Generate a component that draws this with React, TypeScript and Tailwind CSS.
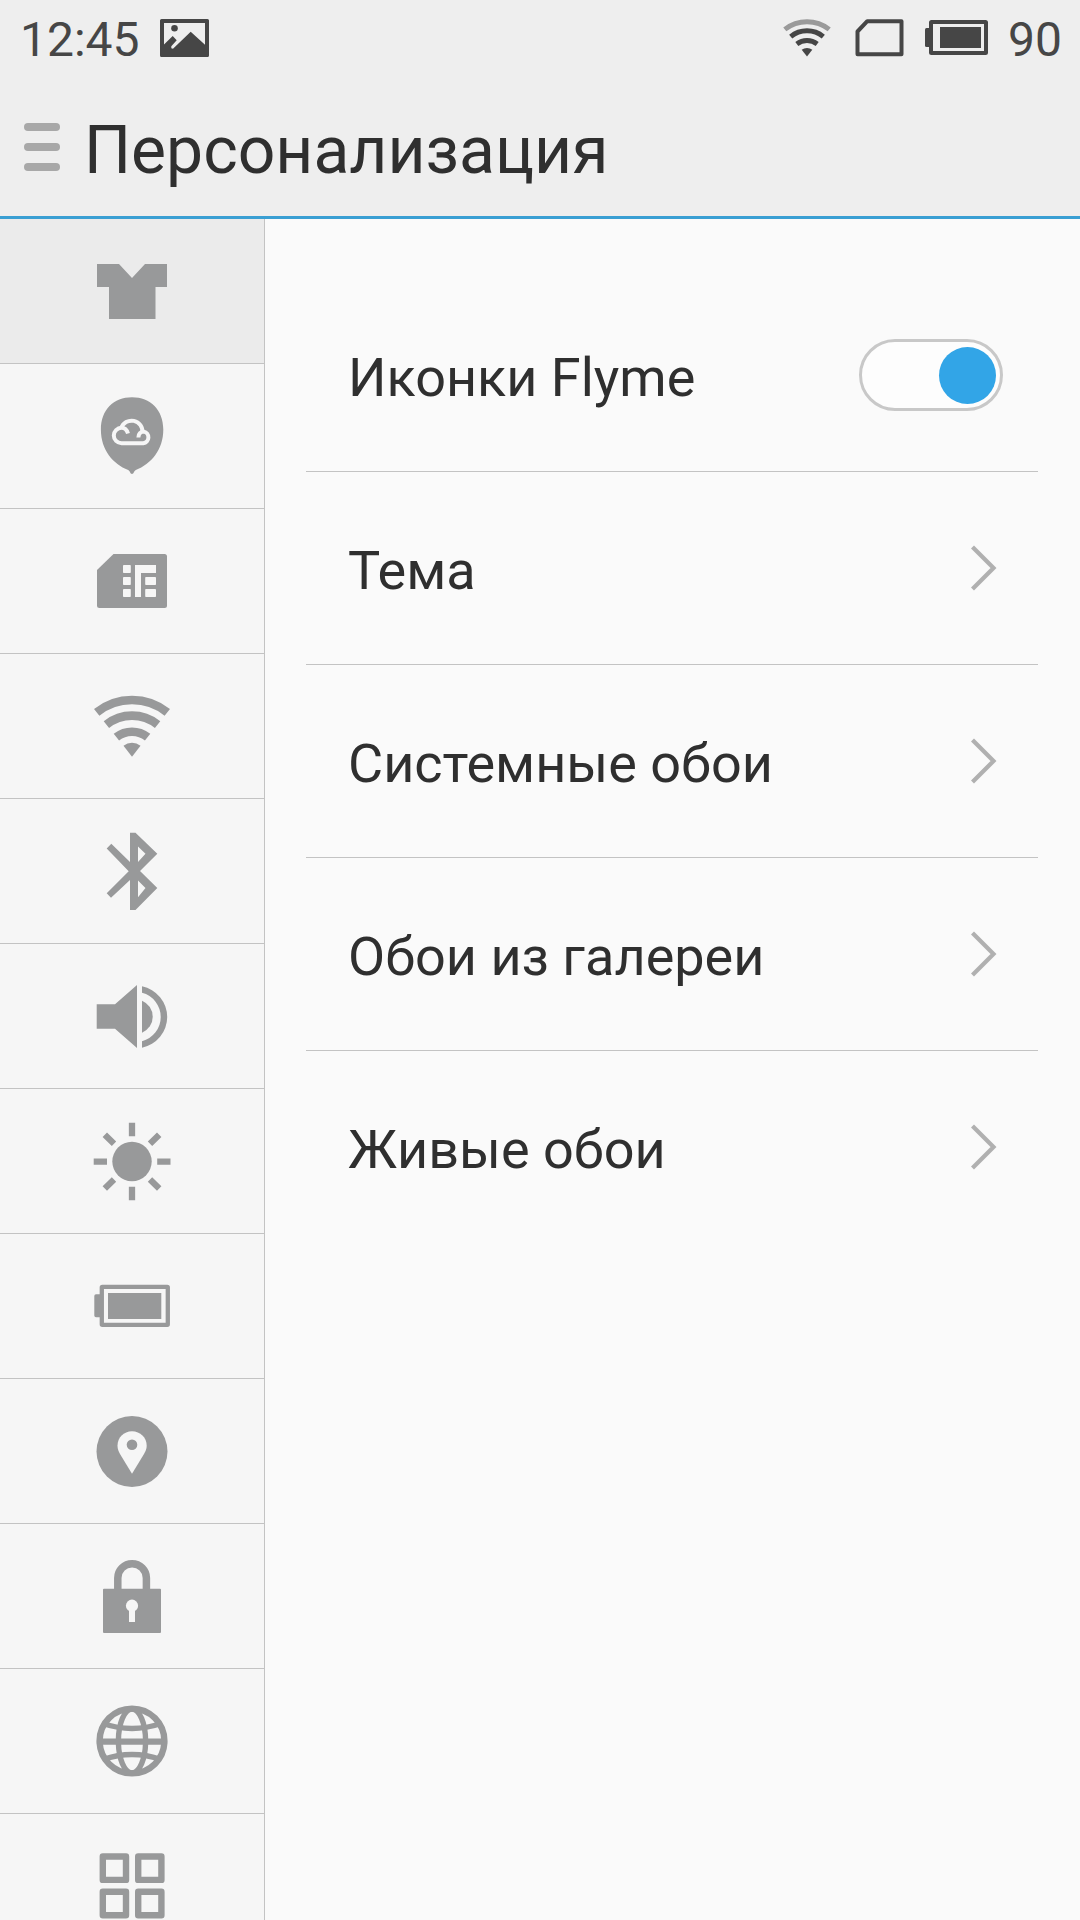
import { useState } from "react";
import type { ReactNode } from "react";

const sections: { id: string; label: string; icon: ReactNode }[] = [
  {
    id: "theme",
    label: "Персонализация",
    icon: <path d="M5 13H27L40 27L53 13H75V36H63.5V68H17V36H5Z" />,
  },
  {
    id: "account",
    label: "Аккаунт Flyme",
    icon: (
      <>
        <path d="M40 1.3C58.5 1.3 71.3 14 71.3 33.5C71.3 54 59 68 43.8 74C42 74.8 41.8 78 40 78C38.2 78 38 74.8 36.2 74C21 68 8.9 54 8.9 33.5C8.9 14 21.5 1.3 40 1.3Z" />
        <g fill="none" stroke="#f6f6f6" strokeWidth="4">
          <path d="M36 37.5C34.8 33.5 32.3 31.8 29.5 31.8A7.5 7.5 0 0 0 29.5 47.2H51.3A5.9 5.9 0 0 0 51.8 35.6C48.6 35.8 46.6 38 46.4 41.5" />
          <path d="M29.2 32.2A10.9 10.9 0 0 1 50.4 36.8" />
        </g>
      </>
    ),
  },
  {
    id: "sim",
    label: "SIM-карта",
    icon: (
      <>
        <path d="M21.5 13H72.5A2.5 2.5 0 0 1 75 15.5V64.5A2.5 2.5 0 0 1 72.5 67H7.5A2.5 2.5 0 0 1 5 64.5V29Z" />
        <g fill="#f6f6f6">
          <rect x="31" y="24" width="7.8" height="8" rx="0.8" />
          <rect x="31" y="36" width="7.8" height="8" rx="0.8" />
          <rect x="31" y="48" width="7.8" height="8" rx="0.8" />
          <path d="M43 24H64V32H49V56H43Z" />
          <rect x="53.2" y="36" width="10.8" height="8" rx="0.8" />
          <rect x="53.2" y="48" width="10.8" height="8" rx="0.8" />
        </g>
      </>
    ),
  },
  {
    id: "wifi",
    label: "Wi-Fi",
    icon: (
      <>
        <g fill="none" stroke="currentColor" strokeWidth="8.6">
          <path d="M4.7 26.4A56.6 56.6 0 0 1 75.3 26.4" />
          <path d="M14.4 38.6A41 41 0 0 1 65.6 38.6" />
          <path d="M24.4 51.2A25 25 0 0 1 55.6 51.2" />
        </g>
        <path d="M40 70.7L31.5 59.7A14 14 0 0 1 48.5 59.7Z" />
      </>
    ),
  },
  {
    id: "bluetooth",
    label: "Bluetooth",
    icon: (
      <path
        fillRule="evenodd"
        d="M38 1.7H43.5L65.3 22.7L48 40L65.3 57L43.5 79H38V49L19 66.7L14.7 62.3L36.7 40.3L14.7 17.5L19.3 12.7L38 31ZM46 15.5V31L53.5 22.7ZM46 49.5V66.3L53.5 57Z"
      />
    ),
  },
  {
    id: "sound",
    label: "Звук",
    icon: (
      <>
        <path d="M4.7 28.3H23L45 9V72L23 52.7H4.7Z" />
        <path d="M50 24.7A17.3 17.3 0 0 1 50 56.7Z" />
        <path d="M50 10.3A31.3 31.3 0 0 1 50 71.7V65.2A25 25 0 0 0 50 16.8Z" />
      </>
    ),
  },
  {
    id: "display",
    label: "Экран",
    icon: (
      <>
        <circle cx="40" cy="40.5" r="19.7" />
        <path
          fill="none"
          stroke="currentColor"
          strokeWidth="6.3"
          d="M40 1.7V15.3M40 65.7V79.3M1.7 40.7H15M65.2 40.7H78.5M12.8 13.7L22 22.7M67.2 13.7L58 22.7M12.8 67.5L22 58.5M67.2 67.5L58 58.5"
        />
      </>
    ),
  },
  {
    id: "battery",
    label: "Батарея",
    icon: (
      <>
        <rect
          x="9.8"
          y="20.8"
          width="66"
          height="38"
          rx="0.5"
          fill="none"
          stroke="currentColor"
          strokeWidth="4.3"
        />
        <rect x="16" y="27" width="53.3" height="26" />
        <path d="M8 28.3H4A1.7 1.7 0 0 0 2.3 30V49.6A1.7 1.7 0 0 0 4 51.3H8Z" />
      </>
    ),
  },
  {
    id: "location",
    label: "Местоположение",
    icon: (
      <>
        <circle cx="40" cy="40.5" r="35.5" />
        <path
          fill="#f6f6f6"
          d="M40 20.3C48.3 20.3 54.7 26.7 54.7 34.8C54.7 38 53.5 40.5 52 43L40 62.7L28 43C26.5 40.5 25.5 38 25.5 34.8C25.5 26.7 31.7 20.3 40 20.3Z"
        />
        <circle cx="40" cy="33.7" r="5.3" />
      </>
    ),
  },
  {
    id: "security",
    label: "Безопасность",
    icon: (
      <>
        <rect x="11" y="32.7" width="58" height="44.3" rx="1" />
        <path
          fill="none"
          stroke="currentColor"
          strokeWidth="7.5"
          d="M25.8 34V22A14.3 14.3 0 0 1 54.4 22V34"
        />
        <circle cx="40" cy="49.7" r="6.1" fill="#f6f6f6" />
        <rect x="37" y="52" width="6" height="14" fill="#f6f6f6" />
      </>
    ),
  },
  {
    id: "language",
    label: "Язык и ввод",
    icon: (
      <g fill="none" stroke="currentColor" strokeWidth="5.4">
        <circle cx="40" cy="40" r="32.4" strokeWidth="6.4" />
        <ellipse cx="40" cy="40" rx="13.6" ry="32" />
        <path d="M8 40.7H72" strokeWidth="6.2" />
        <path d="M11 22.5Q40 32.5 69 22.5M11 58.5Q40 48.5 69 58.5" />
      </g>
    ),
  },
  {
    id: "apps",
    label: "Приложения",
    icon: (
      <g fill="none" stroke="currentColor" strokeWidth="6.4" strokeLinejoin="round">
        <rect x="10.8" y="10.5" width="23.2" height="23.4" />
        <rect x="46.2" y="10.5" width="23.2" height="23.4" />
        <rect x="10.8" y="45.8" width="23.2" height="23.4" />
        <rect x="46.2" y="45.8" width="23.2" height="23.4" />
      </g>
    ),
  },
];

const links = ["Тема", "Системные обои", "Обои из галереи", "Живые обои"];

function StatusBar() {
  return (
    <div className="flex h-[76px] items-center justify-between pr-[18px] pl-5 text-5xl text-[#464646]">
      <div className="flex items-center gap-5">
        <span className="pt-[3px]">12:45</span>
        <svg viewBox="0 0 49 38" className="h-[38px] w-[49px]" fill="currentColor" aria-hidden="true">
          <path
            fillRule="evenodd"
            d="M1.5 0H47.5A1.5 1.5 0 0 1 49 1.5V36.5A1.5 1.5 0 0 1 47.5 38H1.5A1.5 1.5 0 0 1 0 36.5V1.5A1.5 1.5 0 0 1 1.5 0ZM4 4V25.5L12.7 17L16.7 21.3L11.3 27.3V29.2L13 29.7L30.7 12.7L45 25.7V4Z"
          />
          <circle cx="14.5" cy="9.3" r="3.3" />
        </svg>
      </div>
      <div className="flex items-center">
        <svg viewBox="0 0 48 38" className="mr-6 h-[38px] w-12" fill="none" stroke="currentColor" strokeWidth="5" aria-hidden="true">
          <path stroke="#9a9a9a" d="M1.8 10.4A36 36 0 0 1 46.2 10.4" />
          <path d="M7.7 17.6A26 26 0 0 1 40.3 17.6" />
          <path d="M13.8 25A17 17 0 0 1 34.2 25" />
          <path d="M24 37.5L18.7 30.8A8.5 8.5 0 0 1 29.3 30.8Z" fill="currentColor" stroke="none" />
        </svg>
        <svg viewBox="0 0 49 38" className="mr-[21px] h-[38px] w-[49px]" fill="none" stroke="currentColor" strokeWidth="4" aria-hidden="true">
          <path strokeLinejoin="round" d="M12.3 2.2H46.5V35.2H2.5V12.5Z" />
        </svg>
        <svg viewBox="0 0 63 36" className="mr-5 h-9 w-[63px]" fill="currentColor" aria-hidden="true">
          <rect x="6" y="2" width="55" height="31" rx="0.5" fill="none" stroke="currentColor" strokeWidth="4" />
          <rect x="15" y="7" width="41" height="21" />
          <path d="M4.5 8H1.5A1.5 1.5 0 0 0 0 9.5V25.5A1.5 1.5 0 0 0 1.5 27H4.5Z" />
        </svg>
        <span className="pt-[3px]">90</span>
      </div>
    </div>
  );
}

export default function App() {
  const [active, setActive] = useState("theme");
  const [flymeIcons, setFlymeIcons] = useState(true);

  return (
    <div className="flex h-screen flex-col overflow-hidden bg-[#fafafa] font-['Roboto',sans-serif] text-[#2f2f2f]">
      <header className="shrink-0 border-b-[3px] border-[#3a9fd3] bg-[#eee]">
        <StatusBar />
        <div className="flex h-[140px] items-center gap-6 px-6 pt-0.5">
          <button type="button" aria-label="Меню" className="flex w-9 flex-col gap-3">
            <span className="h-2 w-full rounded-full bg-[#a8a8a8]" />
            <span className="h-2 w-full rounded-full bg-[#a8a8a8]" />
            <span className="h-2 w-full rounded-full bg-[#a8a8a8]" />
          </button>
          <h1 className="pt-2 text-[66px] leading-none">Персонализация</h1>
        </div>
      </header>

      <div className="flex min-h-0 flex-1">
        {/* Section rail */}
        <nav className="w-[265px] shrink-0 overflow-y-auto border-r border-[#c3c3c3] bg-[#f6f6f6] [scrollbar-width:none]">
          {sections.map((section) => (
            <button
              key={section.id}
              type="button"
              aria-label={section.label}
              onClick={() => setActive(section.id)}
              className={`flex h-[145px] w-full items-center justify-center border-b border-[#c3c3c3] text-[#98999a] ${
                active === section.id ? "bg-[#ebebeb]" : ""
              }`}
            >
              <svg viewBox="0 0 80 80" className="size-20" fill="currentColor" aria-hidden="true">
                {section.icon}
              </svg>
            </button>
          ))}
        </nav>

        {/* Options */}
        <main className="flex-1 pt-[60px] pr-[42px] pl-[41px] text-[54px] leading-none">
          <label className="flex h-[193px] items-center justify-between border-b border-[#c3c3c3] pr-[35px] pl-[42px]">
            <span className="pt-1.5">Иконки Flyme</span>
            <input
              type="checkbox"
              role="switch"
              checked={flymeIcons}
              onChange={(e) => setFlymeIcons(e.target.checked)}
              className="flex h-[72px] w-36 appearance-none items-center rounded-full border-[3px] border-[#c8c8c8] bg-[#fdfdfd] px-1 before:size-[57px] before:rounded-full before:bg-[#bdbdbd] checked:justify-end checked:before:bg-[#32a5e7]"
            />
          </label>
          {links.map((link) => (
            <a
              key={link}
              href="#"
              className="flex h-[193px] items-center justify-between border-b border-[#c3c3c3] pr-10 pl-[42px] last:border-transparent"
            >
              <span className="pt-1.5">{link}</span>
              <svg viewBox="0 0 28 48" className="h-12 w-7" fill="none" stroke="#b0b0b0" strokeWidth="4.2" aria-hidden="true">
                <path d="M2.5 3L23.5 24L2.5 45" />
              </svg>
            </a>
          ))}
        </main>
      </div>
    </div>
  );
}
